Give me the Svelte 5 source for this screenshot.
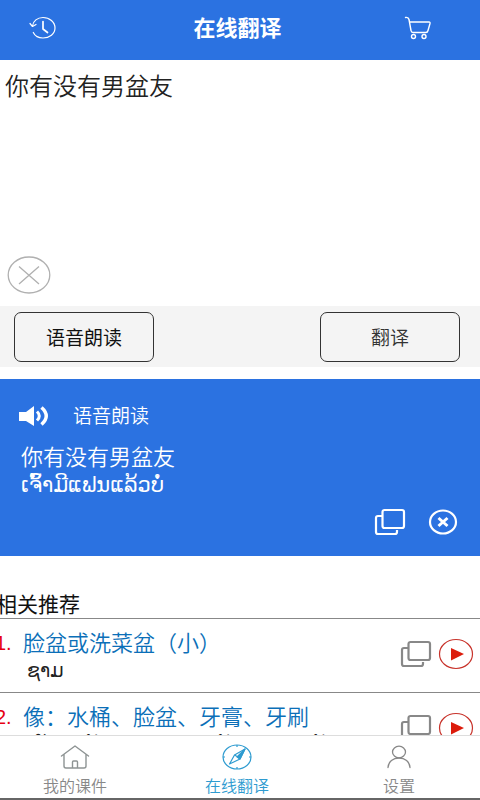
<script>
  let source = $state('你有没有男盆友');
  const related = [
    { zh: '脸盆或洗菜盆（小）', lo: 'ຊາມ' },
    { zh: '像：水桶、脸盆、牙膏、牙刷', lo: 'ເຊັ່ນ: ຄຸນ້ຳ, ຊາມ, ຢາຖູແຂ້ວ, ແປງຖູແຂ້ວ' }
  ];
</script>

{#snippet copyIcon()}
  <svg width="32" height="28" viewBox="0 0 32 28" fill="none" stroke="currentColor" stroke-width="2.200" aria-hidden="true">
    <rect x="8.500" y="2" width="21.500" height="18" rx="2" />
    <path d="M8 8H4Q2 8 2 10V24Q2 26 4 26H21Q23 26 23 24V22" />
  </svg>
{/snippet}

<div class="page">
  <header>
    <button class="icon" aria-label="历史记录">
      <svg width="28" height="24" viewBox="0 0 28 24" fill="none" stroke="currentColor" stroke-width="1.2" stroke-linecap="round" stroke-linejoin="round">
        <path d="M3.5 10C4 5 8.500 1.500 14 1.500C20.500 1.500 26 6 26 12S20.500 22 14 22C9.500 22 6 20 4.300 16.500" />
        <path d="M1 7.500L3.500 10.500L7 8.500" />
        <path d="M14 5.500V13L18.500 16.500" stroke-width="1.700" />
      </svg>
    </button>
    <h1>在线翻译</h1>
    <button class="icon" aria-label="购物车">
      <svg width="28" height="24" viewBox="0 0 28 24" fill="none" stroke="currentColor" stroke-width="1.4" stroke-linecap="round" stroke-linejoin="round">
        <path d="M1.500 1.500Q4.500 1 5 3.500L7 14.500Q7.300 16.500 9 16.500H22Q23.500 16.500 24 14.500L26 7.500Q26.300 6 25 6H5.600" />
        <circle cx="9.500" cy="20.500" r="2" />
        <circle cx="20" cy="20.500" r="2" />
      </svg>
    </button>
  </header>

  <section class="source">
    <textarea aria-label="输入文字" bind:value={source}></textarea>
    <button class="icon clear" aria-label="清空" onclick={() => (source = '')}>
      <svg width="44" height="38" viewBox="0 0 44 38" fill="none" stroke="#b0b0b0" stroke-width="1.300">
        <ellipse cx="22" cy="19" rx="20.800" ry="18" />
        <path d="M12 10.500L32 28M32 10.500L12 28" />
      </svg>
    </button>
  </section>

  <div class="actions">
    <button class="strong">语音朗读</button>
    <button>翻译</button>
  </div>

  <section class="result">
    <button class="speak">
      <svg width="32" height="24" viewBox="0 0 32 24" aria-hidden="true">
        <path d="M1 9H8L16 3V23L8 18H1Z" fill="currentColor" />
        <path d="M19 8.500Q23.500 13 19 17.500" fill="none" stroke="currentColor" stroke-width="3" />
        <path d="M23.500 4.500Q33 13 23.500 21.500" fill="none" stroke="currentColor" stroke-width="3.500" />
      </svg>
      <span>语音朗读</span>
    </button>
    <p class="zh">你有没有男盆友</p>
    <p class="lo" lang="lo">ເຈົ້າມີແຟນແລ້ວບໍ່</p>
    <div class="tools">
      <button class="icon" aria-label="复制">{@render copyIcon()}</button>
      <button class="icon" aria-label="关闭">
        <svg width="30" height="28" viewBox="0 0 30 28" fill="none" stroke="currentColor">
          <ellipse cx="15" cy="14" rx="13" ry="11.500" stroke-width="2.200" />
          <path d="M10.500 10L19.500 18M19.500 10L10.500 18" stroke-width="3" />
        </svg>
      </button>
    </div>
  </section>

  <section class="related">
    <h2>相关推荐</h2>
    <ol>
      {#each related as item, i}
        <li>
          <span class="num">{i + 1}.</span>
          <div class="words">
            <p class="zh">{item.zh}</p>
            <p class="lo" lang="lo">{item.lo}</p>
          </div>
          <button class="icon copy" aria-label="复制">{@render copyIcon()}</button>
          <button class="icon" aria-label="播放">
            <svg width="36" height="32" viewBox="0 0 36 32">
              <ellipse cx="18" cy="16" rx="16.500" ry="14.500" fill="none" stroke="#c8332b" stroke-width="1.200" />
              <path d="M13 10L26 16L13 22.500Z" fill="#dc1c0c" />
            </svg>
          </button>
        </li>
      {/each}
    </ol>
  </section>

  <nav>
    <a href="#courses">
      <svg width="30" height="26" viewBox="0 0 30 26" fill="none" stroke="#8e9494" stroke-width="1.400" stroke-linecap="round" stroke-linejoin="round">
        <path d="M1.500 12L15 2L28.500 12M4 10.500V22Q4 24 6 24H24Q26 24 26 22V10.500M12.500 24V18Q12.500 17 13.500 17H16.500Q17.500 17 17.500 18V24" />
      </svg>
      <span>我的课件</span>
    </a>
    <a href="#translate" class="active" aria-current="page">
      <svg width="30" height="26" viewBox="0 0 30 26" fill="none" stroke="currentColor" stroke-width="1.200" stroke-linejoin="round">
        <ellipse cx="15" cy="13" rx="14" ry="12" />
        <path d="M23 5L12.500 11L7.500 20L18 15Z" />
        <path d="M23 5L15 13L18 15Z" fill="currentColor" />
        <path d="M12.500 11Q15 12 18 15M15 1V3M15 23V25M1 13H3M27 13H29" />
      </svg>
      <span>在线翻译</span>
    </a>
    <a href="#settings">
      <svg width="30" height="26" viewBox="0 0 30 26" fill="none" stroke="currentColor" stroke-width="1.300" stroke-linecap="round">
        <ellipse cx="15" cy="8" rx="6.500" ry="5.800" />
        <path d="M4 23.500C4.500 17.500 9 14 15 14S25.500 17.500 26 23.500" />
      </svg>
      <span>设置</span>
    </a>
  </nav>
</div>

<style>
  :global(body) {
    margin: 0;
  }

  .page {
    display: flex;
    flex-direction: column;
    height: 100vh;
    overflow: hidden;
    background: #fff;
    color: #222;
    font-family: 'Noto Sans CJK SC', 'DejaVu Sans', sans-serif;
  }

  h1,
  h2,
  p,
  ol {
    margin: 0;
    padding: 0;
    font-weight: 400;
  }

  button {
    padding: 0;
    border: 0;
    background: none;
    color: inherit;
    font-family: inherit;
    cursor: pointer;
  }

  svg {
    display: block;
    flex: none;
  }

  .icon {
    flex: none;
  }

  header {
    display: flex;
    flex: none;
    align-items: center;
    justify-content: space-between;
    box-sizing: border-box;
    height: 60px;
    padding: 0 48px 4px 29px;
    background: #2b72e1;
    color: #fff;
  }

  h1 {
    padding: 0 0 4px 14px;
    font-size: 22px;
    line-height: 32px;
    font-weight: 700;
  }

  .source {
    display: flex;
    flex: none;
    flex-direction: column;
    align-items: flex-start;
    height: 246px;
  }

  textarea {
    flex: 1;
    box-sizing: border-box;
    width: 100%;
    padding: 7px 5px;
    border: 0;
    outline: 0;
    resize: none;
    background: none;
    color: #222;
    font-family: inherit;
    font-size: 24px;
    line-height: 36px;
    font-weight: 350;
  }

  .clear {
    margin: 0 0 12px 7px;
  }

  .actions {
    display: flex;
    flex: none;
    justify-content: space-between;
    padding: 6px 20px 5px 14px;
    background: #f4f4f4;
  }

  .actions button {
    box-sizing: border-box;
    width: 140px;
    height: 50px;
    border: 1px solid #333;
    border-radius: 7px;
    color: #333;
    font-size: 19px;
    line-height: 28px;
    font-weight: 350;
  }

  .actions .strong {
    color: #111;
    font-weight: 400;
  }

  .result {
    flex: none;
    margin-top: 12px;
    padding: 22px 22px 20px 18px;
    background: #2b72e1;
    color: #fff;
  }

  .speak {
    display: flex;
    align-items: center;
    gap: 23px;
    font-size: 19px;
    line-height: 28px;
    font-weight: 350;
  }

  .result p {
    padding-left: 3px;
  }

  .zh {
    font-size: 22px;
    line-height: 32px;
    font-weight: 350;
  }

  .result .zh {
    margin-top: 10px;
  }

  .lo {
    font-family: 'DejaVu Sans', sans-serif;
    font-size: 19px;
    line-height: 26px;
  }

  .result .lo {
    font-size: 21px;
    line-height: 28px;
  }

  .tools {
    display: flex;
    justify-content: flex-end;
    gap: 22px;
    margin-top: 9px;
  }

  .related {
    flex: 1;
    min-height: 0;
    overflow: hidden;
    padding-top: 32px;
  }

  h2 {
    margin-left: -4px;
    color: #111;
    font-size: 21px;
    line-height: 30px;
  }

  ol {
    list-style: none;
  }

  li {
    display: flex;
    align-items: center;
    box-sizing: border-box;
    height: 74px;
    padding: 0 6px 4px 0;
    border-top: 1px solid #888;
  }

  .num {
    align-self: flex-start;
    width: 28px;
    margin: 8px 0 0 -5px;
    color: #e60012;
    font-family: 'Liberation Sans', sans-serif;
    font-size: 20px;
    line-height: 32px;
  }

  .words {
    flex: 1;
    align-self: flex-start;
    min-width: 0;
    margin-top: 6px;
  }

  .words .zh {
    color: #0b6fb8;
  }

  .words .lo {
    padding-left: 4px;
    color: #222;
    white-space: nowrap;
  }

  .copy {
    margin-right: 6px;
    color: #888;
  }

  nav {
    display: flex;
    flex: none;
    justify-content: space-between;
    box-sizing: border-box;
    height: 65px;
    padding: 8px 48px 0 42px;
    border-top: 1px solid #ddd;
    border-bottom: 2px solid #666;
    background: #fff;
  }

  a {
    display: flex;
    flex-direction: column;
    align-items: center;
    gap: 3px;
    min-width: 66px;
    color: #888;
    font-size: 16px;
    line-height: 24px;
    font-weight: 350;
    text-decoration: none;
  }

  .active {
    color: #2e9bd0;
  }
</style>
